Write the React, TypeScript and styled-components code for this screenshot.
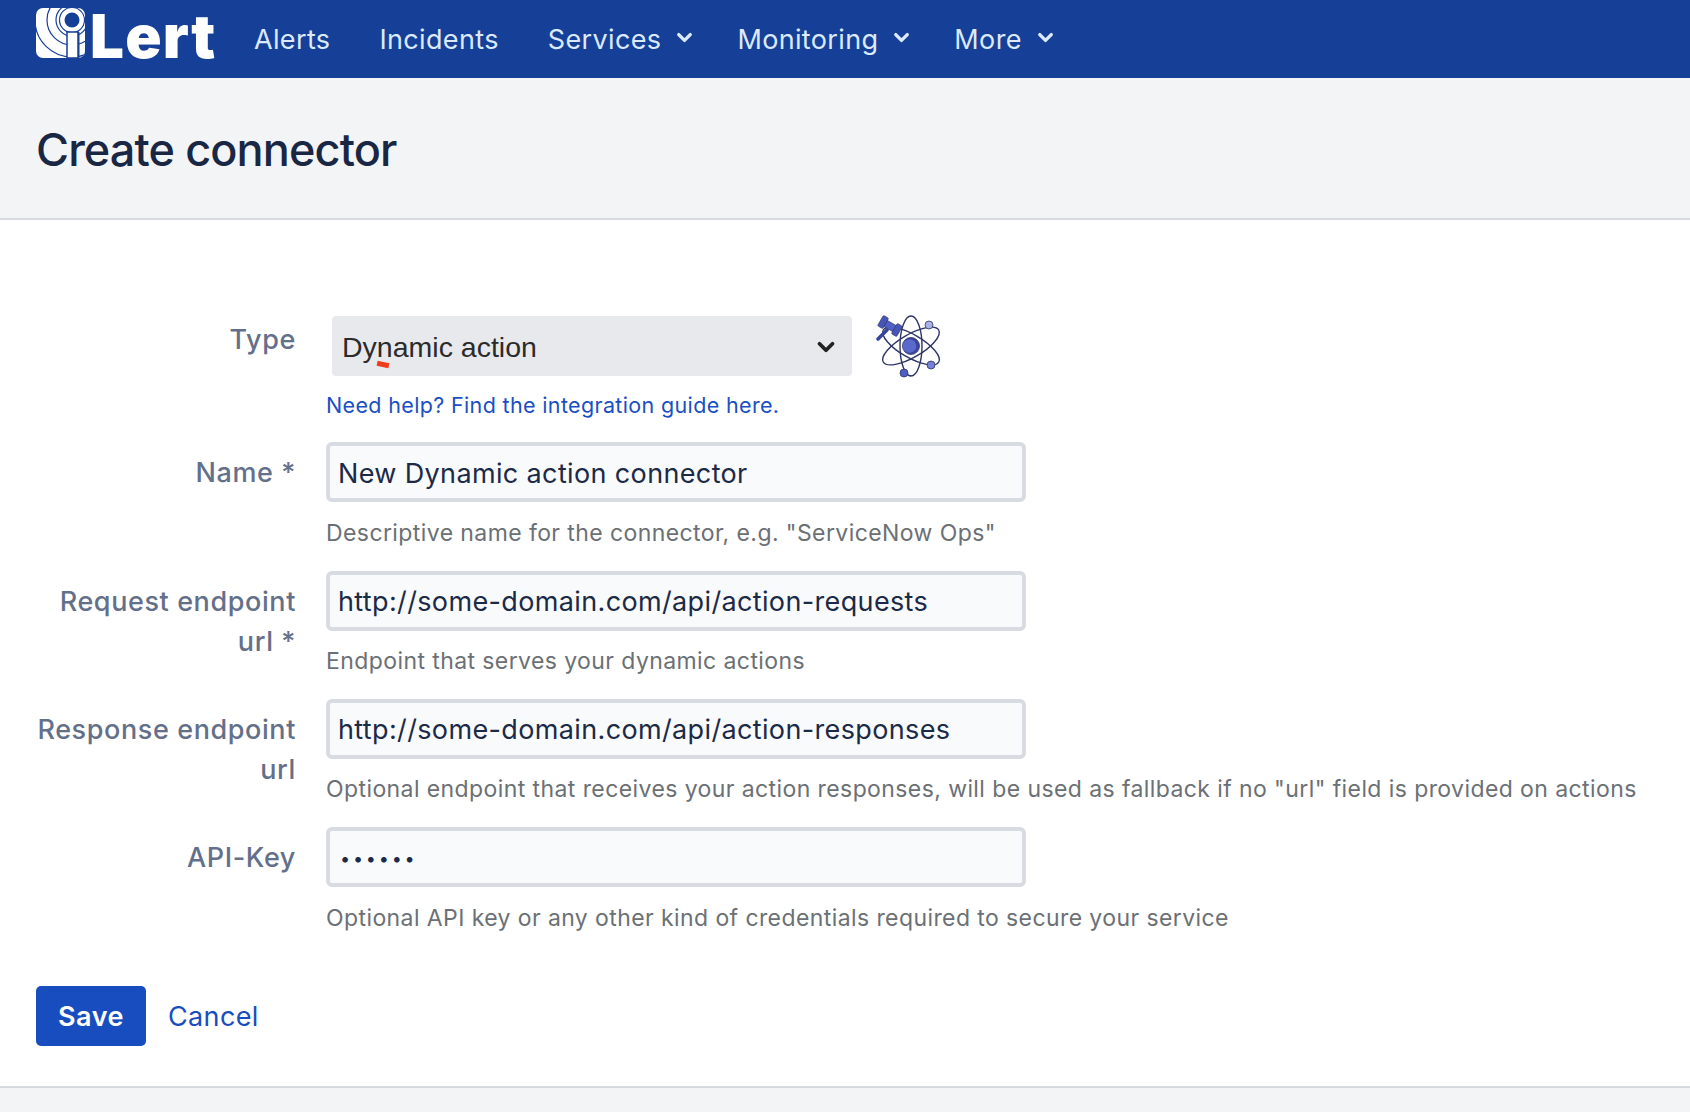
import React from "react";
import styled, { createGlobalStyle } from "styled-components";
import { ChevronDown } from "lucide-react";

const GlobalStyle = createGlobalStyle`
  html, body { margin: 0; padding: 0; background: #ffffff; }
  body { font-family: Inter, "Liberation Sans", sans-serif; overflow: hidden; }
`;

const Page = styled.div`
  height: 1112px;
  display: flex;
  flex-direction: column;
  background: #f3f4f6;
`;

const TopBar = styled.nav`
  height: 78px;
  flex-shrink: 0;
  background: #163f98;
  display: flex;
  align-items: center;
  padding-left: 36px;
`;

const LogoWrap = styled.div`
  display: flex;
  align-items: center;
  gap: 5px;
  width: 178px;
  margin-right: 40px;
  padding-bottom: 12px;
  svg { flex-shrink: 0; }
`;

const LogoText = styled.span`
  font-size: 60px;
  line-height: 60px;
  font-weight: 900;
  color: #fff;
  letter-spacing: 1.2px;
  margin-top: 5px;
`;

const NavList = styled.div`
  display: flex;
  align-items: center;
  gap: 49px;
`;

const NavItem = styled.a`
  display: flex;
  align-items: center;
  gap: 12px;
  font-size: 27px;
  letter-spacing: 0.35px;
  color: #dbeafe;
  svg {
    margin-right: -8px;
    margin-top: -3px;
  }
`;

const Heading = styled.header`
  height: 142px;
  flex-shrink: 0;
  box-sizing: border-box;
  border-bottom: 2px solid #d8dae1;
  display: flex;
  align-items: center;
  padding: 2px 36px 0;
`;

const Title = styled.h1`
  margin: 0;
  font-size: 45px;
  font-weight: 500;
  letter-spacing: -0.87px;
  color: #1a2744;
`;

const FormCard = styled.main`
  background: #fff;
  border-bottom: 2px solid #d8dae1;
  padding: 96px 36px 0;
  height: 868px;
  flex-shrink: 0;
  box-sizing: border-box;
`;

const Row = styled.div`
  display: grid;
  grid-template-columns: 260px 1fr;
  column-gap: 30px;
  margin-bottom: 20.8px;
`;

const Label = styled.label<{ $select?: boolean }>`
  text-align: right;
  font-size: 27px;
  line-height: 40px;
  letter-spacing: 0.6px;
  font-weight: 500;
  color: #64708a;
  padding-top: ${({ $select }) => ($select ? "4px" : "11px")};
`;

const FieldCol = styled.div`
  min-width: 0;
`;

const SelectLine = styled.div`
  height: 60px;
  display: flex;
  align-items: center;
  gap: 24px;
  padding-left: 6px;
`;

const SelectBox = styled.div`
  width: 520px;
  height: 60px;
  box-sizing: border-box;
  background: #e8e9ec;
  border-radius: 4px;
  display: flex;
  align-items: center;
  justify-content: space-between;
  padding: 2px 13px 0 10px;
  font-family: "Liberation Sans", sans-serif;
  font-size: 28.5px;
  color: #2b2b2b;
  svg { color: #222; }
`;

const Squiggle = styled.span`
  position: relative;
  &::after {
    content: "";
    position: absolute;
    left: 0;
    bottom: -4px;
    width: 12px;
    height: 5px;
    background: #ee3b1c;
    transform: rotate(12deg);
  }
`;

const TextInput = styled.div<{ $secret?: boolean }>`
  width: 700px;
  height: 60px;
  box-sizing: border-box;
  background: #f9fafb;
  border: 4px solid #d9dbe2;
  border-radius: 6px;
  display: flex;
  align-items: center;
  padding: 2px ${({ $secret }) => ($secret ? "10px" : "8px")} 0;
  font-size: ${({ $secret }) => ($secret ? "18px" : "27px")};
  letter-spacing: ${({ $secret }) => ($secret ? "2.8px" : "0.36px")};
  color: #1c2a48;
`;

const Help = styled.p`
  margin: 14.5px 0 0;
  font-size: 23px;
  line-height: 33px;
  letter-spacing: 0.41px;
  white-space: nowrap;
  color: #6b7075;
`;

const HelpLink = styled.a`
  display: block;
  margin-top: 12.5px;
  font-size: 21.5px;
  line-height: 33px;
  letter-spacing: 0.35px;
  color: #1a4fc4;
`;

const Actions = styled.div`
  display: flex;
  align-items: center;
  gap: 22px;
  margin-top: 51.5px;
`;

const SaveButton = styled.button`
  width: 110px;
  height: 60px;
  border: 0;
  border-radius: 5px;
  background: #184dc0;
  color: #fff;
  font: 600 27px Inter, sans-serif;
  letter-spacing: 0.5px;
`;

const CancelLink = styled.a`
  font-size: 27px;
  letter-spacing: 0.35px;
  color: #184dc0;
`;

function Logo() {
  const blue = "#163f98";
  return (
    <svg width="49" height="50" viewBox="0 0 49 50" aria-hidden="true">
      <defs>
        <clipPath id="logo-square">
          <rect x="0" y="0" width="49" height="50" rx="7" />
        </clipPath>
      </defs>
      <g clipPath="url(#logo-square)">
        <rect x="0" y="0" width="49" height="50" fill="#fff" />
        <g fill="none" stroke={blue} strokeWidth="1.2">
          <circle cx="36" cy="12" r="16" />
          <circle cx="36" cy="12" r="25" />
          <circle cx="36" cy="12" r="37" />
        </g>
        <circle cx="36" cy="12" r="12.5" fill="#fff" stroke={blue} strokeWidth="1.2" />
        <circle cx="36" cy="12" r="7.5" fill={blue} />
        <rect x="31" y="24" width="11" height="26" fill="#fff" stroke={blue} strokeWidth="1.5" />
        <rect x="42" y="24" width="1.5" height="26" fill={blue} />
      </g>
    </svg>
  );
}

function AtomIcon() {
  const ink = "#2f3566";
  return (
    <svg width="66" height="66" viewBox="0 0 66 66" aria-hidden="true">
      <g fill="none" stroke={ink} strokeWidth="1.4">
        <ellipse cx="35" cy="33" rx="11" ry="30" />
        <ellipse cx="35" cy="33" rx="11.5" ry="32" transform="rotate(60 35 33)" />
        <ellipse cx="35" cy="33" rx="11.5" ry="32" transform="rotate(120 35 33)" />
      </g>
      <circle cx="35" cy="33" r="8.5" fill="#3a44a0" stroke={ink} strokeWidth="0.8" />
      <circle cx="33.5" cy="33" r="6.8" fill="#5a69cc" />
      <circle cx="53" cy="12" r="4" fill="#a9b2e6" stroke={ink} strokeWidth="0.8" />
      <circle cx="55" cy="52" r="4" fill="#7482d6" stroke={ink} strokeWidth="0.8" />
      <circle cx="28" cy="60" r="4" fill="#4f5fc4" stroke={ink} strokeWidth="0.8" />
      <path d="M11 17 L2 26" stroke="#35459e" strokeWidth="3.5" strokeLinecap="round" />
      <g transform="rotate(30 14 13)">
        <rect x="5" y="9.5" width="18" height="7" fill="#4f5fc4" stroke={ink} strokeWidth="0.6" />
        <rect x="3" y="7" width="6" height="12" rx="1.2" fill="#4555b8" stroke={ink} strokeWidth="0.6" />
        <rect x="19" y="7" width="6" height="12" rx="1.2" fill="#4555b8" stroke={ink} strokeWidth="0.6" />
      </g>
    </svg>
  );
}

const navItems = [
  { label: "Alerts" },
  { label: "Incidents" },
  { label: "Services", menu: true },
  { label: "Monitoring", menu: true },
  { label: "More", menu: true },
];

const fields = [
  { label: "Name *", value: "New Dynamic action connector", help: 'Descriptive name for the connector, e.g. "ServiceNow Ops"' },
  { label: "Request endpoint url *", value: "http://some-domain.com/api/action-requests", help: "Endpoint that serves your dynamic actions" },
  { label: "Response endpoint url", value: "http://some-domain.com/api/action-responses", help: 'Optional endpoint that receives your action responses, will be used as fallback if no "url" field is provided on actions' },
  { label: "API-Key", value: "••••••", secret: true, help: "Optional API key or any other kind of credentials required to secure your service" },
];

export default function App() {
  return (
    <Page>
      <GlobalStyle />
      <TopBar>
        <LogoWrap>
          <Logo />
          <LogoText>Lert</LogoText>
        </LogoWrap>
        <NavList>
          {navItems.map((item) => (
            <NavItem key={item.label}>
              {item.label}
              {item.menu && <ChevronDown size={23} strokeWidth={3.5} />}
            </NavItem>
          ))}
        </NavList>
      </TopBar>
      <Heading>
        <Title>Create connector</Title>
      </Heading>
      <FormCard>
        <Row>
          <Label $select>Type</Label>
          <FieldCol>
            <SelectLine>
              <SelectBox>
                <span>
                  Dy<Squiggle>n</Squiggle>amic action
                </span>
                <ChevronDown size={26} strokeWidth={3.5} />
              </SelectBox>
              <AtomIcon />
            </SelectLine>
            <HelpLink>Need help? Find the integration guide here.</HelpLink>
          </FieldCol>
        </Row>
        {fields.map((f) => (
          <Row key={f.label}>
            <Label>{f.label}</Label>
            <FieldCol>
              <TextInput $secret={f.secret}>{f.value}</TextInput>
              <Help>{f.help}</Help>
            </FieldCol>
          </Row>
        ))}
        <Actions>
          <SaveButton>Save</SaveButton>
          <CancelLink>Cancel</CancelLink>
        </Actions>
      </FormCard>
    </Page>
  );
}
